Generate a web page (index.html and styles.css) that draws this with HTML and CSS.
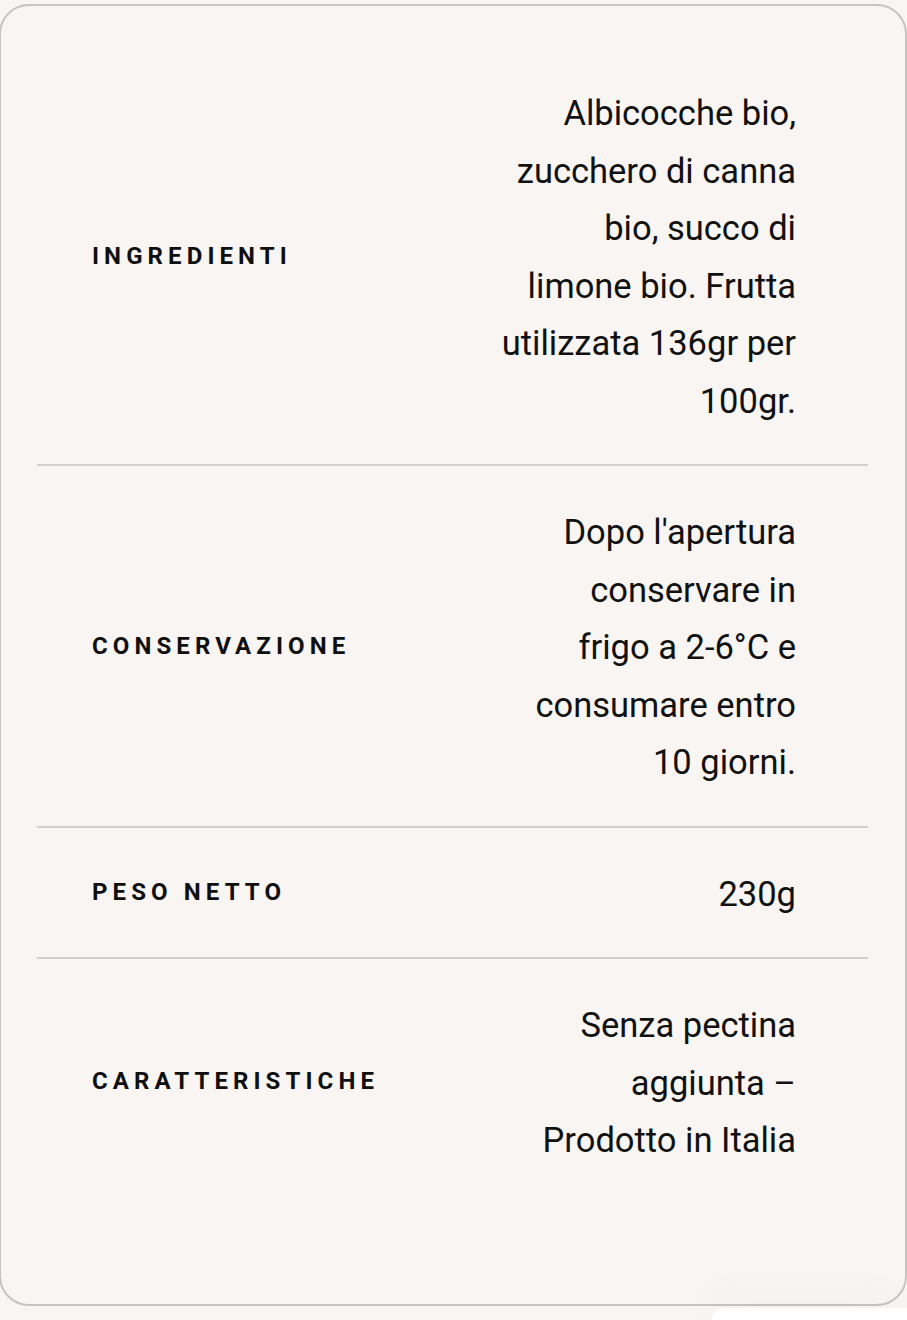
FILE: index.html
```html
<!DOCTYPE html>
<html lang="it">
<head>
<meta charset="utf-8">
<title>Scheda prodotto</title>
<link rel="stylesheet" href="styles.css">
</head>
<body>
<section class="card">
  <div class="specs">
    <div class="row">
      <div class="label">Ingredienti</div>
      <div class="value">Albicocche bio,<br>zucchero di canna<br>bio, succo di<br>limone bio. Frutta<br>utilizzata 136gr per<br>100gr.</div>
    </div>
    <div class="row">
      <div class="label">Conservazione</div>
      <div class="value">Dopo l'apertura<br>conservare in<br>frigo a 2-6°C e<br>consumare entro<br>10 giorni.</div>
    </div>
    <div class="row">
      <div class="label">Peso netto</div>
      <div class="value">230g</div>
    </div>
    <div class="row last">
      <div class="label">Caratteristiche</div>
      <div class="value">Senza pectina<br>aggiunta –<br>Prodotto in Italia</div>
    </div>
  </div>
</section>
<div class="floating"></div>
</body>
</html>
```

FILE: styles.css
```css
html, body {
  margin: 0;
  padding: 0;
  background: #f8f5f2;
  font-family: Roboto, "Liberation Sans", sans-serif;
  color: #111111;
  overflow: hidden;
  height: 1320px;
  position: relative;
}

.card {
  box-sizing: border-box;
  width: 908px;
  height: 1302px;
  margin: 4px 0 0 -1px;
  border: 2px solid #c6c4c2;
  border-radius: 30px;
  background: #f8f5f2;
  padding: 41px 37px 0 36px;
}

.row {
  display: flex;
  justify-content: space-between;
  align-items: center;
  padding: 36px 72px 36px 55px;
  border-bottom: 2px solid #d2cfcc;
}

.row.last {
  border-bottom: none;
}

.label {
  font-size: 24px;
  font-weight: 700;
  letter-spacing: 5.1px;
  text-transform: uppercase;
  color: #0f0f0f;
}

.value {
  font-size: 34.5px;
  line-height: 57.5px;
  text-align: right;
  color: #111111;
  padding-top: 2px;
  margin-bottom: -2px;
}

.floating {
  position: absolute;
  left: 712px;
  top: 1308px;
  width: 195px;
  height: 12px;
  background: #ffffff;
  border-radius: 14px 0 0 0;
  box-shadow: -10px -10px 40px rgba(0, 0, 0, 0.05);
}
```
